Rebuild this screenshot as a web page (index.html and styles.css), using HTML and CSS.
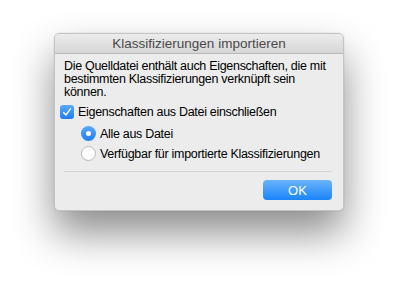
FILE: index.html
```html
<!DOCTYPE html>
<html lang="de">
<head>
  <meta charset="UTF-8" />
  <title>Klassifizierungen importieren</title>
  <link rel="stylesheet" href="styles.css">
</head>
<body>
  <div class="dialog">
    <div class="titlebar">Klassifizierungen importieren</div>
    <div class="body">
      <p class="msg">Die Quelldatei enthält auch Eigenschaften, die mit<br>bestimmten Klassifizierungen verknüpft sein<br>können.</p>
      <label class="check">
        <span class="box"><svg width="10" height="10" viewBox="0 0 10 10"><path d="M1.6 5.4 L4 7.9 L8.5 1.8" fill="none" stroke="#fff" stroke-width="1.4" stroke-linecap="round" stroke-linejoin="round"/></svg></span>
        Eigenschaften aus Datei einschließen
      </label>
      <div class="radios">
        <label class="radio"><span class="dot on"></span>Alle aus Datei</label>
        <label class="radio"><span class="dot"></span>Verfügbar für importierte Klassifizierungen</label>
      </div>
      <hr class="sep">
      <div class="actions"><button class="btn-ok">OK</button></div>
    </div>
  </div>
</body>
</html>
```

FILE: styles.css
```css
body,html{margin:0;padding:0;background:#fff;font-family:'Liberation Sans',Arial,sans-serif;}
body{padding:33px 0 0 54px;height:289px;box-sizing:border-box;overflow:hidden;}
.dialog{width:290px;height:178px;background:#ececec;border:1px solid #c4c4c4;border-radius:5px;box-sizing:border-box;box-shadow:0 22px 40px rgba(0,0,0,.45),0 0 0 1px rgba(0,0,0,.03);overflow:hidden;}
.titlebar{height:19px;line-height:19px;text-align:center;font-size:13.5px;color:#4a4a4a;background:linear-gradient(#ececec,#d6d6d6);border-bottom:1px solid #b9b9b9;}
.body{padding:6px 11px 0 9px;}
.msg{margin:0;font-size:12.5px;line-height:13px;letter-spacing:-.3px;color:#000;white-space:nowrap;}
.check{display:flex;align-items:center;gap:4px;font-size:12.5px;letter-spacing:-.3px;margin-top:6px;height:14px;white-space:nowrap;}
.box{flex-shrink:0;width:14px;height:14px;border-radius:3px;background:linear-gradient(#5aa8fb,#1d7ff4);display:flex;align-items:center;justify-content:center;margin-left:-4px;}
.radios{margin:7px 0 0 17px;display:flex;flex-direction:column;gap:5px;}
.radio{display:flex;align-items:center;gap:4px;font-size:12.5px;letter-spacing:-.3px;height:15px;white-space:nowrap;}
.dot{flex-shrink:0;width:15px;height:15px;border-radius:50%;box-sizing:border-box;background:#fff;border:1px solid #b8b8b8;display:flex;align-items:center;justify-content:center;}
.dot.on{background:linear-gradient(#5aa8fb,#1d7ff4);border:none;}
.dot.on::after{content:"";width:5px;height:5px;border-radius:50%;background:#fff;}
.sep{border:none;border-top:1px solid #d5d5d5;margin:10px 0 0 0;}
.actions{display:flex;justify-content:flex-end;margin-top:8px;}
.btn-ok{width:69px;height:20px;border:none;border-radius:4px;background:linear-gradient(#6ab4fb,#1a84fb);color:#fff;font-family:inherit;font-size:13px;padding:0;}
```
